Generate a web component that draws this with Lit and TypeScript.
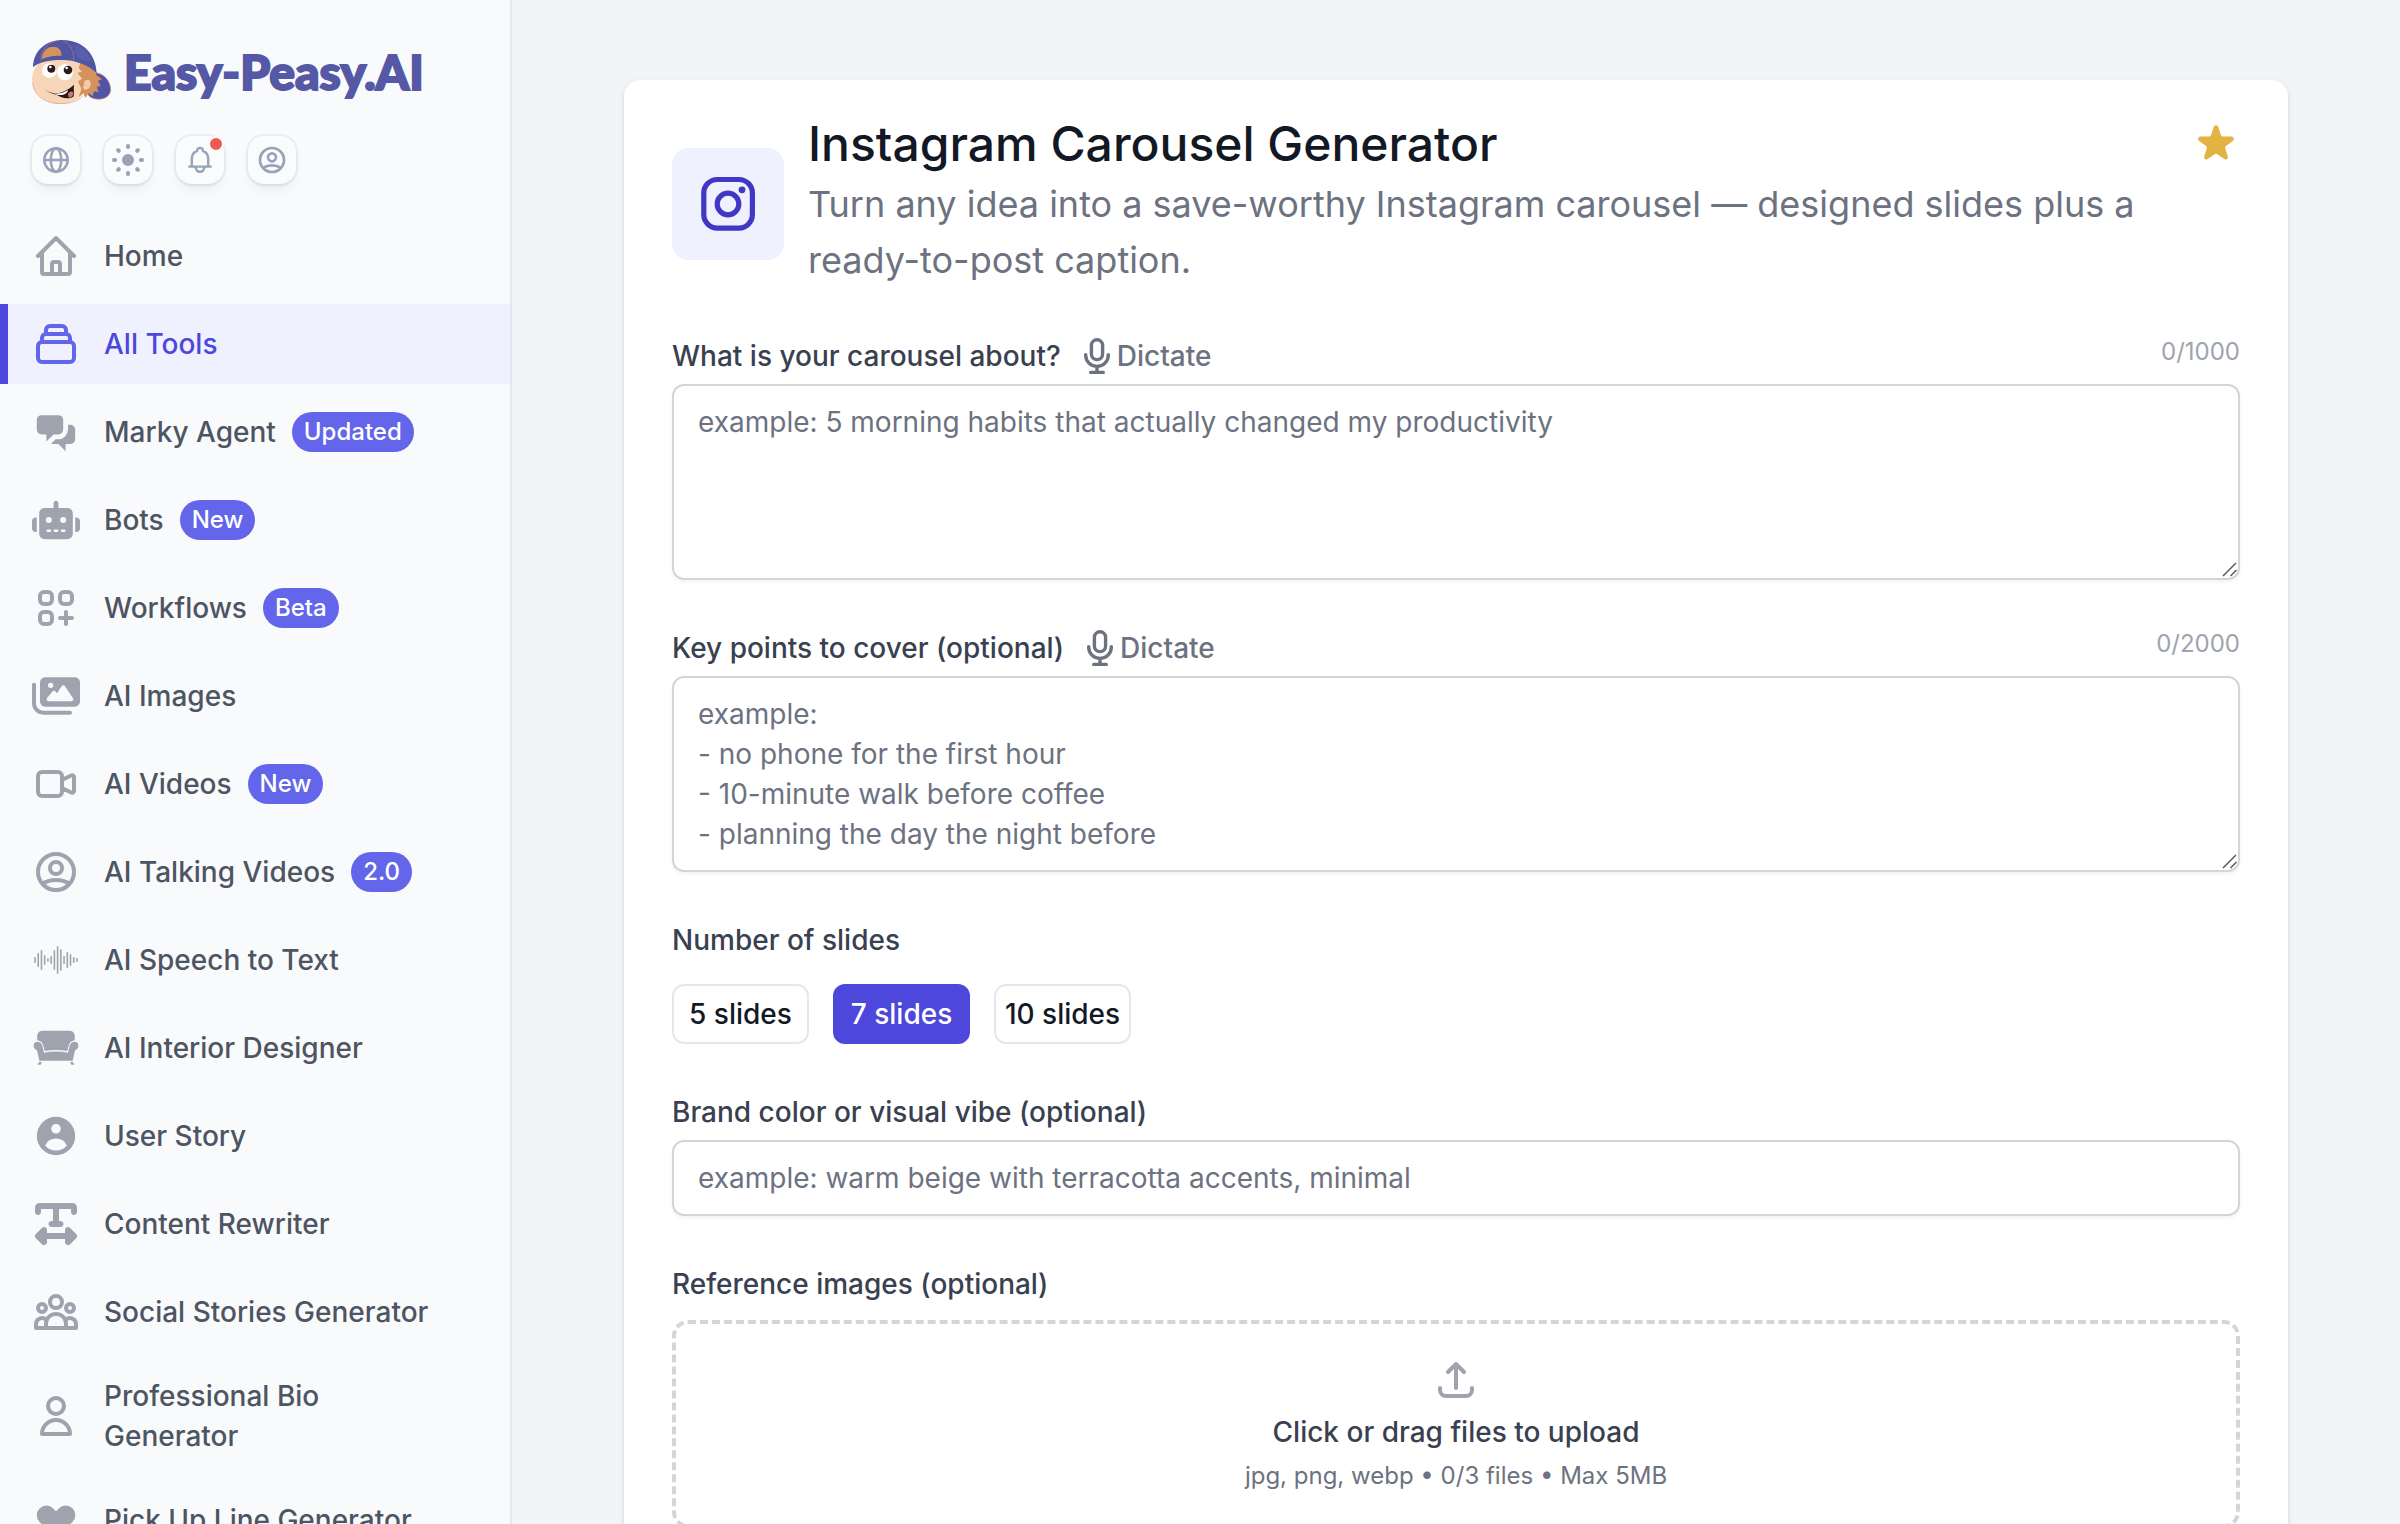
import { LitElement, html, css, svg, nothing, type TemplateResult } from "lit";
import { customElement, property, state } from "lit/decorators.js";
import { classMap } from "lit/directives/class-map.js";

interface IconDef {
  box: string;
  solid?: boolean;
  body: TemplateResult;
}

const line = (d: string): IconDef => ({ box: "0 0 24 24", body: svg`<path d=${d} />` });
const solid = (box: string, ...paths: string[]): IconDef => ({
  box,
  solid: true,
  body: svg`${paths.map((d) => svg`<path fill-rule="evenodd" clip-rule="evenodd" d=${d} />`)}`,
});

const WAVE = [3, 7, 10, 5, 2, 4, 10, 14, 11, 4, 8, 6, 3, 2];

const ICONS: Record<string, IconDef> = {
  home: line("M3 12l2-2m0 0l7-7 7 7M5 10v10a1 1 0 001 1h3m10-11l2 2m-2-2v10a1 1 0 01-1 1h-3m-6 0a1 1 0 001-1v-4a1 1 0 011-1h2a1 1 0 011 1v4a1 1 0 001 1m-6 0h6"),
  tools: line("M19 11H5m14 0a2 2 0 012 2v6a2 2 0 01-2 2H5a2 2 0 01-2-2v-6a2 2 0 012-2m14 0V9a2 2 0 00-2-2M5 11V9a2 2 0 012-2m0 0V5a2 2 0 012-2h6a2 2 0 012 2v2M7 7h10"),
  chat: solid(
    "0 0 20 20",
    "M2 5a2 2 0 012-2h7a2 2 0 012 2v4a2 2 0 01-2 2H9l-3 3v-3H4a2 2 0 01-2-2V5z",
    "M15 7v2a4 4 0 01-4 4H9.828l-1.766 1.767c.28.149.599.233.938.233h2l3 3v-3h2a2 2 0 002-2V9a2 2 0 00-2-2h-1z",
  ),
  robot: solid(
    "0 0 640 512",
    "M320 0c17.7 0 32 14.3 32 32l0 64 120 0c39.8 0 72 32.2 72 72l0 272c0 39.8-32.2 72-72 72l-304 0c-39.8 0-72-32.2-72-72l0-272c0-39.8 32.2-72 72-72l120 0 0-64c0-17.7 14.3-32 32-32zM208 384c-8.8 0-16 7.2-16 16s7.2 16 16 16l32 0c8.8 0 16-7.2 16-16s-7.2-16-16-16l-32 0zm96 0c-8.8 0-16 7.2-16 16s7.2 16 16 16l32 0c8.8 0 16-7.2 16-16s-7.2-16-16-16l-32 0zm96 0c-8.8 0-16 7.2-16 16s7.2 16 16 16l32 0c8.8 0 16-7.2 16-16s-7.2-16-16-16l-32 0zM264 256a40 40 0 1 0 -80 0 40 40 0 1 0 80 0zm152 40a40 40 0 1 0 0-80 40 40 0 1 0 0 80zM48 224l16 0 0 192-16 0c-26.5 0-48-21.5-48-48l0-96c0-26.5 21.5-48 48-48zm544 0c26.5 0 48 21.5 48 48l0 96c0 26.5-21.5 48-48 48l-16 0 0-192 16 0z",
  ),
  grid: line("M17 14v6m-3-3h6M6 10h2a2 2 0 002-2V6a2 2 0 00-2-2H6a2 2 0 00-2 2v2a2 2 0 002 2zm10 0h2a2 2 0 002-2V6a2 2 0 00-2-2h-2a2 2 0 00-2 2v2a2 2 0 002 2zM6 20h2a2 2 0 002-2v-2a2 2 0 00-2-2H6a2 2 0 00-2 2v2a2 2 0 002 2z"),
  images: solid(
    "0 0 576 512",
    "M160 32c-35.3 0-64 28.7-64 64l0 224c0 35.3 28.7 64 64 64l352 0c35.3 0 64-28.7 64-64l0-224c0-35.3-28.7-64-64-64L160 32zM396 138.7l96 144c4.9 7.4 5.4 16.8 1.2 24.6S480.9 320 472 320l-144 0-48 0-80 0c-9.2 0-17.6-5.3-21.6-13.6s-2.9-18.2 2.9-25.4l64-80c4.6-5.7 11.4-9 18.7-9s14.2 3.3 18.7 9l17.3 21.6 56-84C360.5 132 368 128 376 128s15.5 4 20 10.7zM192 128a32 32 0 1 1 64 0 32 32 0 1 1 -64 0zM48 120c0-13.3-10.7-24-24-24S0 106.7 0 120L0 344c0 75.1 60.9 136 136 136l320 0c13.3 0 24-10.7 24-24s-10.7-24-24-24l-320 0c-48.6 0-88-39.4-88-88l0-224z",
  ),
  video: line("M15 10l4.553-2.276A1 1 0 0121 8.618v6.764a1 1 0 01-1.447.894L15 14M5 18h8a2 2 0 002-2V8a2 2 0 00-2-2H5a2 2 0 00-2 2v8a2 2 0 002 2z"),
  person: line("M5.121 17.804A13.937 13.937 0 0112 16c2.5 0 4.847.655 6.879 1.804M15 10a3 3 0 11-6 0 3 3 0 016 0zm6 2a9 9 0 11-18 0 9 9 0 0118 0z"),
  wave: {
    box: "0 0 48 48",
    solid: true,
    body: svg`${WAVE.map(
      (h, i) => svg`<rect x=${2.2 + i * 3.23} y=${24 - h} width="1.6" height=${h * 2} rx="0.8" />`,
    )}`,
  },
  sofa: solid(
    "0 0 144 144",
    "M16 49C14 32 17 20 32 20H112C127 20 130 32 128 49C117 51 112 57 110 66L106 81C84 77 60 77 38 81L34 66C32 57 27 51 16 49Z",
    "M5 67C3 56 14 50 23 55C29 58 31 64 32 70L36 86C60 81 84 81 108 86L112 70C113 64 115 58 121 55C130 50 141 56 139 67C138 74 134 78 129 79L122 110H22L15 79C10 78 6 74 5 67Z",
    "M21 114H30L26 122H17Z",
    "M114 114H123L127 122H118Z",
  ),
  user: solid(
    "0 0 20 20",
    "M18 10a8 8 0 11-16 0 8 8 0 0116 0zm-6-3a2 2 0 11-4 0 2 2 0 014 0zm-2 4a5 5 0 00-4.546 2.916A5.986 5.986 0 0010 16a5.986 5.986 0 004.546-2.084A5 5 0 0010 11z",
  ),
  rewrite: solid(
    "0 0 448 512",
    "M64 128l0-32 128 0 0 128-16 0c-17.7 0-32 14.3-32 32s14.3 32 32 32l96 0c17.7 0 32-14.3 32-32s-14.3-32-32-32l-16 0 0-128 128 0 0 32c0 17.7 14.3 32 32 32s32-14.3 32-32l0-48c0-26.5-21.5-48-48-48L224 32 48 32C21.5 32 0 53.5 0 80l0 48c0 17.7 14.3 32 32 32s32-14.3 32-32zM9.4 361.4c-12.5 12.5-12.5 32.8 0 45.3l64 64c9.2 9.2 22.9 11.9 34.9 6.9s19.8-16.6 19.8-29.6l0-32 192 0 0 32c0 12.9 7.8 24.6 19.8 29.6s25.7 2.2 34.9-6.9l64-64c12.5-12.5 12.5-32.8 0-45.3l-64-64c-9.2-9.2-22.9-11.9-34.9-6.9s-19.8 16.6-19.8 29.6l0 32-192 0 0-32c0-12.9-7.8-24.6-19.8-29.6s-25.7-2.2-34.9 6.9l-64 64z",
  ),
  group: line("M17 20h5v-2a3 3 0 00-5.356-1.857M17 20H7m10 0v-2c0-.656-.126-1.283-.356-1.857M7 20H2v-2a3 3 0 015.356-1.857M7 20v-2c0-.656.126-1.283.356-1.857m0 0a5.002 5.002 0 019.288 0M15 7a3 3 0 11-6 0 3 3 0 016 0zm6 3a2 2 0 11-4 0 2 2 0 014 0zM7 10a2 2 0 11-4 0 2 2 0 014 0z"),
  bio: line("M16 7a4 4 0 11-8 0 4 4 0 018 0zM12 14a7 7 0 00-7 7h14a7 7 0 00-7-7z"),
  heart: solid(
    "0 0 20 20",
    "M3.172 5.172a4 4 0 015.656 0L10 6.343l1.172-1.171a4 4 0 115.656 5.656L10 17.657l-6.828-6.829a4 4 0 010-5.656z",
  ),
  star: solid(
    "0 0 20 20",
    "M9.049 2.927c.3-.921 1.603-.921 1.902 0l1.07 3.292a1 1 0 00.95.69h3.462c.969 0 1.371 1.24.588 1.81l-2.8 2.034a1 1 0 00-.364 1.118l1.07 3.292c.3.921-.755 1.688-1.54 1.118l-2.8-2.034a1 1 0 00-1.175 0l-2.8 2.034c-.784.57-1.838-.197-1.539-1.118l1.07-3.292a1 1 0 00-.364-1.118L2.98 8.72c-.783-.57-.38-1.81.588-1.81h3.461a1 1 0 00.951-.69l1.07-3.292z",
  ),
  globe: {
    box: "0 0 32 32",
    body: svg`<g stroke-width="2.5"><circle cx="16" cy="16" r="11.7" /><ellipse cx="16" cy="16" rx="5.2" ry="11.7" /><path d="M4.5 16h23" /></g>`,
  },
  sun: {
    box: "0 0 32 32",
    body: svg`<circle cx="16" cy="16" r="6" fill="currentColor" stroke="none" /><g stroke-width="4">${[0, 45, 90, 135, 180, 225, 270, 315].map(
      (a) => svg`<path d="M16 2v1" transform=${`rotate(${a} 16 16)`} />`,
    )}</g>`,
  },
  bell: {
    box: "0 0 32 32",
    body: svg`<g stroke-width="2.4"><path d="M5.2 22.6h21.6M7.8 22.4V15.5C7.8 11 9.6 8 13 7C13 2.8 19 2.8 19 7C22.4 8 24.2 11 24.2 15.5V22.4" /><path d="M11.7 23C11.7 29.4 20.3 29.4 20.3 23" /></g>`,
  },
  mic: {
    box: "0 0 40 40",
    body: svg`<g stroke-width="3.4"><rect x="14.4" y="3.700" width="11.200" height="19.900" rx="5.600" /><path d="M8.700 18.600V19.200C8.700 25.400 13.700 30.400 20 30.400S31.300 25.400 31.300 19.200V18.600M20 30.400V36.400M13.700 36.400H26.300" /></g>`,
  },
  upload: line("M4 16v1a3 3 0 003 3h10a3 3 0 003-3v-1m-4-8l-4-4m0 0L8 8m4-4v12"),
  instagram: {
    box: "0 0 64 64",
    body: svg`<rect x="7.800" y="7.500" width="48.600" height="48.600" rx="13.500" stroke-width="5.200" /><circle cx="32" cy="32" r="10.800" stroke-width="5.200" /><circle cx="46" cy="17.800" r="3.400" fill="currentColor" stroke="none" />`,
  },
};

@customElement("ui-icon")
export class UiIcon extends LitElement {
  @property() name = "home";

  static styles = css`
    :host {
      display: block;
      flex: none;
      width: 48px;
      height: 48px;
    }
    svg {
      display: block;
      width: 100%;
      height: 100%;
      overflow: visible;
    }
    .line {
      fill: none;
      stroke: currentColor;
      stroke-width: 2;
      stroke-linecap: round;
      stroke-linejoin: round;
    }
    .solid {
      fill: currentColor;
    }
  `;

  render() {
    const icon = ICONS[this.name];
    return html`<svg class=${icon.solid ? "solid" : "line"} viewBox=${icon.box} aria-hidden="true">${icon.body}</svg>`;
  }
}

@customElement("brand-logo")
export class BrandLogo extends LitElement {
  static styles = css`
    :host {
      display: block;
    }
    .brand {
      display: flex;
      align-items: center;
      gap: 12px;
      height: 64px;
      color: #5558a4;
      text-decoration: none;
    }
    .face {
      flex: none;
      width: 80px;
      height: 64px;
    }
    .name {
      font-family: "Lato", "Open Sans", sans-serif;
      font-weight: 900;
      font-size: 48px;
      line-height: 60px;
      white-space: nowrap;
      -webkit-text-stroke: 2px currentColor;
    }
  `;

  render() {
    return html`<a class="brand" href="#">
      <svg class="face" viewBox="0 0 240 192" aria-hidden="true">
        <path d="M190 98C215 100 236 122 236 150C234 172 210 184 180 174C168 168 165 160 170 150Z" fill="#5055a5" stroke="#c98a72" stroke-width="2" />
        <ellipse cx="84" cy="118" rx="84" ry="74" fill="#f6d5b8" />
        <path d="M2 130C6 170 44 192 90 191C120 190 140 180 152 168" fill="none" stroke="#d79b75" stroke-width="2" />
        <path d="M146 66C170 72 190 90 194 106L210 118L198 122L206 138L194 140L200 156L186 154L182 168L170 160L160 174L154 160L140 172L148 146L138 124L150 116L136 98L150 96L140 84Z" fill="#d6925c" />
        <path d="M156 122C170 112 182 124 176 138C172 150 158 156 152 144C150 138 158 136 154 130Z" fill="#f4cba8" stroke="#c9855a" stroke-width="2" />
        <path d="M3 82C4 30 44 0 92 0C152 0 192 42 194 100C168 72 120 58 86 60C50 60 20 66 3 82Z" fill="#5055a5" />
        <path d="M132 14C160 26 176 46 178 66L150 60C124 50 128 26 132 14Z" fill="#6468b4" opacity=".5" />
        <path d="M30 58C30 34 44 20 64 20C82 20 90 34 88 48C66 46 46 50 30 58Z" fill="#d6925c" />
        <path d="M26 62C26 30 48 4 84 1M92 1C116 14 128 34 124 60" fill="none" stroke="#b97c86" stroke-width="2" />
        <ellipse cx="52" cy="92" rx="22" ry="22" fill="#fff" />
        <ellipse cx="99" cy="97" rx="24" ry="24" fill="#fff" />
        <circle cx="58" cy="86" r="12" fill="#2d1c1a" />
        <circle cx="108" cy="90" r="13" fill="#2d1c1a" />
        <circle cx="55" cy="81" r="4" fill="#fff" />
        <circle cx="104" cy="84" r="4" fill="#fff" />
        <path d="M40 150C70 168 96 160 126 134C124 152 128 162 124 170C106 180 86 172 74 164C62 162 50 158 40 150Z" fill="#2a1715" />
        <path d="M52 156C80 166 94 158 108 150C106 162 92 168 76 164Z" fill="#fff" />
        <path d="M108 162C112 154 120 152 124 158C124 168 116 174 110 172Z" fill="#d2766c" />
      </svg>
      <span class="name">Easy-Peasy.AI</span>
    </a>`;
  }
}

interface NavItem {
  label: string;
  icon: string;
  badge?: string;
  active?: boolean;
}

const NAV: NavItem[] = [
  { label: "Home", icon: "home" },
  { label: "All Tools", icon: "tools", active: true },
  { label: "Marky Agent", icon: "chat", badge: "Updated" },
  { label: "Bots", icon: "robot", badge: "New" },
  { label: "Workflows", icon: "grid", badge: "Beta" },
  { label: "AI Images", icon: "images" },
  { label: "AI Videos", icon: "video", badge: "New" },
  { label: "AI Talking Videos", icon: "person", badge: "2.0" },
  { label: "AI Speech to Text", icon: "wave" },
  { label: "AI Interior Designer", icon: "sofa" },
  { label: "User Story", icon: "user" },
  { label: "Content Rewriter", icon: "rewrite" },
  { label: "Social Stories Generator", icon: "group" },
  { label: "Professional Bio Generator", icon: "bio" },
  { label: "Pick Up Line Generator", icon: "heart" },
];

const QUICK = [
  { label: "Language", icon: "globe" },
  { label: "Theme", icon: "sun" },
  { label: "Notifications", icon: "bell", dot: true },
  { label: "Account", icon: "person" },
];

@customElement("side-bar")
export class SideBar extends LitElement {
  static styles = css`
    :host {
      display: block;
      flex: none;
      box-sizing: border-box;
      width: 512px;
      overflow-x: hidden;
      overflow-y: auto;
      scrollbar-width: none;
      background: #f9fafc;
      border-right: 2px solid #e5e7eb;
    }
    .top {
      padding: 40px 32px 0;
    }
    .quick {
      display: flex;
      gap: 24px;
      margin-top: 32px;
    }
    .quick-button {
      position: relative;
      display: grid;
      place-items: center;
      width: 48px;
      height: 48px;
      padding: 0;
      border: 0;
      border-radius: 16px;
      background: #fafbfc;
      color: #97a3b6;
      box-shadow: 0 0 0 2px rgb(0 0 0 / 5%), 0 8px 12px -2px rgb(0 0 0 / 5%), 0 4px 8px -4px rgb(0 0 0 / 5%);
    }
    .quick-button ui-icon {
      width: 32px;
      height: 32px;
    }
    .dot {
      position: absolute;
      top: 0;
      right: 0;
      width: 12px;
      height: 12px;
      border: 2px solid #f9fafc;
      border-radius: 50%;
      background: #ed5b56;
    }
    .nav {
      display: flex;
      flex-direction: column;
      gap: 8px;
      margin-top: 32px;
    }
    .item {
      display: flex;
      align-items: center;
      gap: 24px;
      padding: 16px 32px;
      color: #4d5562;
      font-size: 28px;
      line-height: 40px;
      font-weight: 500;
      text-decoration: none;
    }
    .item ui-icon {
      color: #9ea3ae;
    }
    .item.active {
      background: #eff1fe;
      color: #4d47dc;
      box-shadow: inset 8px 0 #4d47dc;
    }
    .item.active ui-icon {
      color: #6366ea;
    }
    .label {
      max-width: 328px;
    }
    .text {
      display: flex;
      align-items: center;
      gap: 16px;
    }
    .badge {
      padding: 0 12px;
      border-radius: 20px;
      background: #6366ea;
      color: #fff;
      font-size: 24px;
      line-height: 40px;
    }
  `;

  render() {
    return html`
      <div class="top">
        <brand-logo></brand-logo>
        <div class="quick">
          ${QUICK.map(
            (q) => html`<button class="quick-button" type="button" aria-label=${q.label}>
              <ui-icon name=${q.icon}></ui-icon>${q.dot ? html`<span class="dot"></span>` : nothing}
            </button>`,
          )}
        </div>
      </div>
      <nav class="nav">
        ${NAV.map(
          (n) => html`<a class=${classMap({ item: true, active: !!n.active })} href="#">
            <ui-icon name=${n.icon}></ui-icon>
            <span class="text">
              <span class="label">${n.label}</span>
              ${n.badge ? html`<span class="badge">${n.badge}</span>` : nothing}
            </span>
          </a>`,
        )}
      </nav>
    `;
  }
}

@customElement("carousel-form")
export class CarouselForm extends LitElement {
  @state() private slides = 7;
  @state() private topic = "";
  @state() private points = "";

  static styles = css`
    :host {
      display: block;
      padding: 40px 48px 48px;
      border-radius: 16px;
      background: #fff;
      box-shadow: 0 2px 6px rgb(0 0 0 / 10%), 0 2px 4px -2px rgb(0 0 0 / 10%);
      font-size: 28px;
      line-height: 40px;
      color: #394150;
    }
    .form {
      display: flex;
      flex-direction: column;
      gap: 48px;
    }
    .header {
      display: flex;
      align-items: center;
      gap: 24px;
    }
    .tile {
      display: grid;
      flex: none;
      place-items: center;
      width: 112px;
      height: 112px;
      border-radius: 16px;
      background: #eff1fe;
      color: #4037c3;
    }
    .tile ui-icon {
      width: 64px;
      height: 64px;
    }
    .intro {
      flex: 1;
    }
    .title {
      margin: 0 0 8px;
      color: #131825;
      font-size: 48px;
      line-height: 48px;
      font-weight: 500;
    }
    .lead {
      margin: 0;
      color: #6c727f;
      font-size: 36px;
      line-height: 56px;
    }
    .favorite {
      align-self: flex-start;
      padding: 0;
      border: 0;
      background: none;
      color: #e3b341;
    }
    .row {
      display: flex;
      align-items: flex-start;
      margin-bottom: 8px;
    }
    .caption {
      display: block;
      font-weight: 500;
    }
    .dictate {
      display: flex;
      align-items: center;
      margin-left: 16px;
      padding: 0;
      border: 0;
      background: none;
      color: #6c727f;
      font: inherit;
      font-weight: 500;
    }
    .dictate ui-icon {
      width: 40px;
      height: 40px;
    }
    .count {
      margin-left: auto;
      color: #9ea3ae;
      font-size: 24px;
      line-height: 32px;
    }
    .area {
      position: relative;
    }
    .grip {
      position: absolute;
      right: 2px;
      bottom: 2px;
      width: 16px;
      height: 16px;
      fill: none;
      stroke: #5a5a5a;
      stroke-width: 1.5;
      pointer-events: none;
    }
    .control {
      display: block;
      box-sizing: border-box;
      width: 100%;
      padding: 16px 24px;
      border: 2px solid #d2d5da;
      border-radius: 12px;
      background: #fff;
      color: #131825;
      font: inherit;
      box-shadow: 0 2px 4px rgb(0 0 0 / 5%);
      resize: vertical;
    }
    .control::-webkit-resizer {
      background: transparent;
    }
    .single {
      height: 76px;
    }
    .control::placeholder {
      color: #6c727f;
      opacity: 1;
    }
    .options {
      display: flex;
      gap: 24px;
      margin-top: 24px;
    }
    .group {
      margin: 0;
      padding: 0;
      border: 0;
    }
    .group legend {
      padding: 0;
    }
    .option {
      box-sizing: border-box;
      width: 137px;
      height: 60px;
      padding: 0;
      border: 2px solid #e5e7eb;
      border-radius: 12px;
      background: #fff;
      color: #131825;
      font: inherit;
      font-weight: 500;
      white-space: nowrap;
    }
    .option.on {
      border-color: #4d47dc;
      background: #4d47dc;
      color: #fff;
    }
    .drop {
      display: flex;
      flex-direction: column;
      align-items: center;
      gap: 8px;
      margin-top: 16px;
      padding: 32px;
      border: 4px dashed #d2d5da;
      border-radius: 16px;
      font-weight: 500;
    }
    .drop ui-icon {
      color: #9ea3ae;
    }
    .hint {
      color: #6c727f;
      font-size: 24px;
      line-height: 32px;
      font-weight: 400;
    }
    .file {
      position: absolute;
      width: 1px;
      height: 1px;
      opacity: 0;
    }
  `;

  private labelRow(id: string, text: string, used: number, limit: number) {
    return html`<div class="row">
      <label class="caption" for=${id}>${text}</label>
      <button class="dictate" type="button"><ui-icon name="mic"></ui-icon>Dictate</button>
      <span class="count">${used}/${limit}</span>
    </div>`;
  }

  private grip() {
    return html`<svg class="grip" viewBox="0 0 16 16" aria-hidden="true"><path d="M1 14L14 1M8.500 14L14.500 8" /></svg>`;
  }

  render() {
    return html`<form class="form">
      <header class="header">
        <span class="tile"><ui-icon name="instagram"></ui-icon></span>
        <div class="intro">
          <h1 class="title">Instagram Carousel Generator</h1>
          <p class="lead">Turn any idea into a save-worthy Instagram carousel — designed slides plus a ready-to-post caption.</p>
        </div>
        <button class="favorite" type="button" aria-label="Favorite"><ui-icon name="star"></ui-icon></button>
      </header>
      <div>
        ${this.labelRow("topic", "What is your carousel about?", this.topic.length, 1000)}
        <div class="area">
          <textarea
            class="control"
            id="topic"
            rows="4"
            maxlength="1000"
            placeholder="example: 5 morning habits that actually changed my productivity"
            @input=${(e: Event) => (this.topic = (e.target as HTMLTextAreaElement).value)}
          ></textarea>
          ${this.grip()}
        </div>
      </div>
      <div>
        ${this.labelRow("points", "Key points to cover (optional)", this.points.length, 2000)}
        <div class="area">
          <textarea
            class="control"
            id="points"
            rows="4"
            maxlength="2000"
            placeholder=${"example:\n- no phone for the first hour\n- 10-minute walk before coffee\n- planning the day the night before"}
            @input=${(e: Event) => (this.points = (e.target as HTMLTextAreaElement).value)}
          ></textarea>
          ${this.grip()}
        </div>
      </div>
      <fieldset class="group">
        <legend class="caption">Number of slides</legend>
        <div class="options">
          ${[5, 7, 10].map(
            (n) => html`<button
              class=${classMap({ option: true, on: n === this.slides })}
              type="button"
              aria-pressed=${n === this.slides ? "true" : "false"}
              @click=${() => (this.slides = n)}
            >${n} slides</button>`,
          )}
        </div>
      </fieldset>
      <div>
        <div class="row"><label class="caption" for="vibe">Brand color or visual vibe (optional)</label></div>
        <input class="control single" id="vibe" type="text" placeholder="example: warm beige with terracotta accents, minimal" />
      </div>
      <div>
        <label class="caption" for="files">Reference images (optional)</label>
        <label class="drop" for="files">
          <ui-icon name="upload"></ui-icon>
          <span>Click or drag files to upload</span>
          <span class="hint">jpg, png, webp • 0/3 files • Max 5MB</span>
        </label>
        <input class="file" id="files" type="file" multiple />
      </div>
    </form>`;
  }
}

@customElement("app-root")
export class AppRoot extends LitElement {
  static styles = css`
    :host {
      display: flex;
      height: 100vh;
      overflow: hidden;
      background: #f3f4f6;
      font-family: "Inter", "Liberation Sans", sans-serif;
      -webkit-font-smoothing: antialiased;
    }
    .main {
      flex: 1;
      min-width: 0;
      padding: 80px 112px;
      overflow-y: auto;
      scrollbar-width: none;
    }
  `;

  render() {
    return html`<side-bar></side-bar>
      <main class="main"><carousel-form></carousel-form></main>`;
  }
}
